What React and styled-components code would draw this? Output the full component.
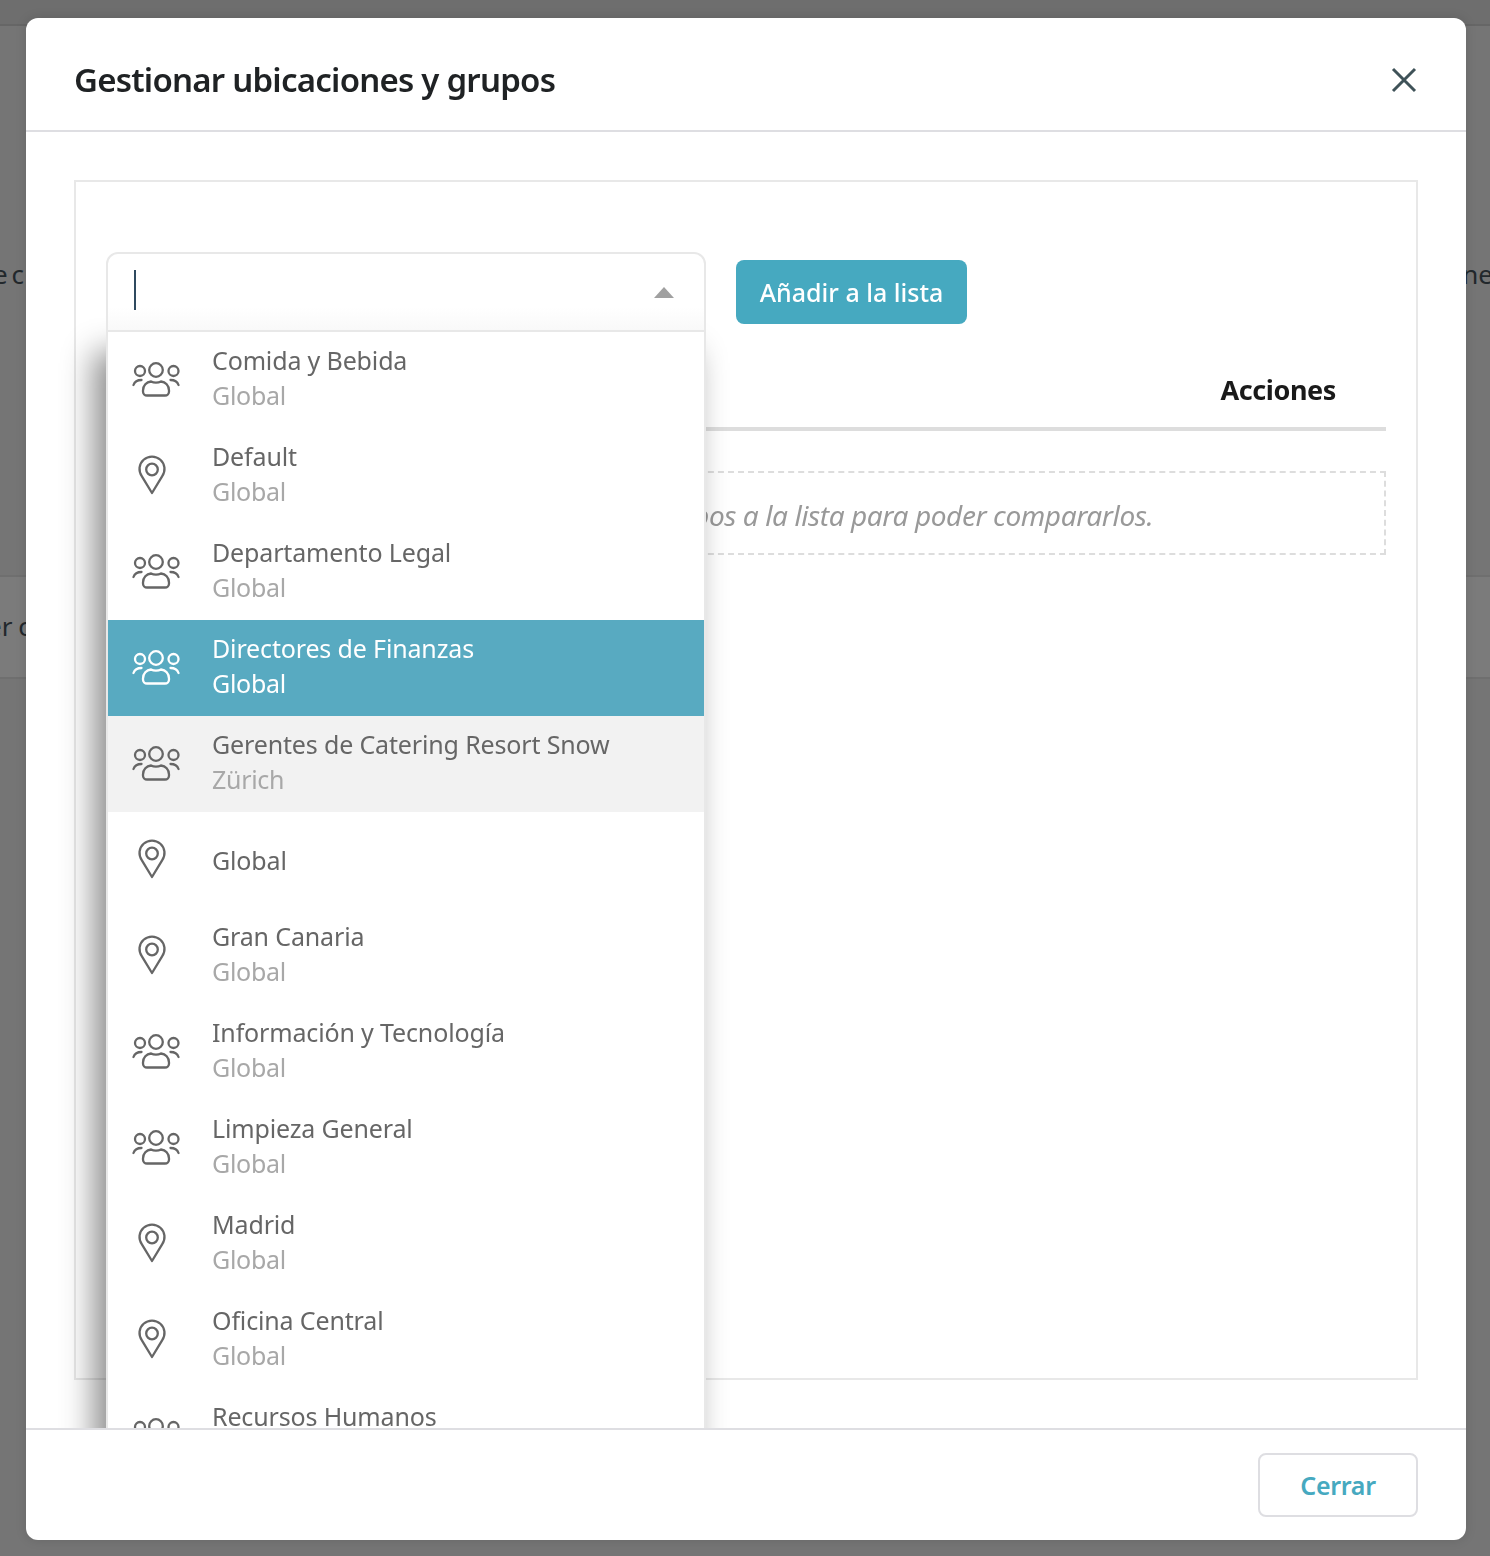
import styled, { createGlobalStyle } from 'styled-components';

const GlobalStyle = createGlobalStyle`
  html, body {
    margin: 0;
    padding: 0;
    height: 100%;
    background: #757575;
    font-family: 'Noto Sans', 'Open Sans', sans-serif;
  }

  * {
    box-sizing: border-box;
  }
`;

const options = [
  { kind: 'group', title: 'Comida y Bebida', sub: 'Global' },
  { kind: 'pin', title: 'Default', sub: 'Global' },
  { kind: 'group', title: 'Departamento Legal', sub: 'Global' },
  { kind: 'group', title: 'Directores de Finanzas', sub: 'Global', state: 'selected' },
  { kind: 'group', title: 'Gerentes de Catering Resort Snow', sub: 'Zürich', state: 'hover' },
  { kind: 'pin', title: 'Global' },
  { kind: 'pin', title: 'Gran Canaria', sub: 'Global' },
  { kind: 'group', title: 'Información y Tecnología', sub: 'Global' },
  { kind: 'group', title: 'Limpieza General', sub: 'Global' },
  { kind: 'pin', title: 'Madrid', sub: 'Global' },
  { kind: 'pin', title: 'Oficina Central', sub: 'Global' },
  { kind: 'group', title: 'Recursos Humanos', sub: 'Global' },
];

function GroupIcon() {
  return (
    <svg width="48" height="35" viewBox="0 0 48 35" fill="none" stroke="currentColor" strokeWidth="2.3" strokeLinecap="round">
      <circle cx="8" cy="9" r="5" />
      <circle cx="24" cy="8" r="6.8" />
      <circle cx="41.5" cy="9" r="5" />
      <path d="M15 33.5h18a4 4 0 0 0 4-4v-1c0-5-3.5-8.5-8-9-1.5.8-3 1.2-5 1.2s-3.5-.4-5-1.2c-4.500.5-8 4-8 9v1a4 4 0 0 0 4 4z" />
      <path d="M1.500 23c1-3 4-5 8-5" />
      <path d="M46.500 23c-1-3-4-5-8-5" />
    </svg>
  );
}

function PinIcon() {
  return (
    <svg width="30" height="40" viewBox="0 0 30 40" fill="none" stroke="currentColor" strokeWidth="2.3" strokeLinejoin="round">
      <path d="M15 38L4.9 21.4A12.5 12.5 0 1 1 25.1 21.4Z" />
      <circle cx="15" cy="14.500" r="5.8" />
    </svg>
  );
}

export default function App() {
  return (
    <>
      <GlobalStyle />
      <Backdrop>
        <BackdropTop />
        <BackdropLine>
          <span>e c</span>
          <span>ne</span>
        </BackdropLine>
        <BackdropRow>
          <span>er c</span>
        </BackdropRow>
      </Backdrop>
      <Overlay>
        <Modal>
          <Header>
            <Title>Gestionar ubicaciones y grupos</Title>
            <CloseButton aria-label="Cerrar">
              <svg width="26" height="26" viewBox="0 0 26 26" fill="none" stroke="currentColor" strokeWidth="3">
                <path d="M2 2l22 22M24 2L2 24" />
              </svg>
            </CloseButton>
          </Header>
          <Body>
            <Panel>
              <Controls>
                <Combobox>
                  <SearchField>
                    <Caret />
                    <ArrowUp />
                  </SearchField>
                  <Menu>
                    {options.map((option) => (
                      <Option key={option.title} $state={option.state}>
                        <OptionIcon $pin={option.kind === 'pin'}>
                          {option.kind === 'group' ? <GroupIcon /> : <PinIcon />}
                        </OptionIcon>
                        <OptionText $hasSub={Boolean(option.sub)}>
                          <OptionTitle>{option.title}</OptionTitle>
                          {option.sub && <OptionSub $state={option.state}>{option.sub}</OptionSub>}
                        </OptionText>
                      </Option>
                    ))}
                  </Menu>
                </Combobox>
                <AddButton>Añadir a la lista</AddButton>
              </Controls>
              <TableHead>
                <ActionsLabel>Acciones</ActionsLabel>
              </TableHead>
              <EmptyNote>Añade más ubicaciones o grupos a la lista para poder compararlos.</EmptyNote>
            </Panel>
          </Body>
          <Footer>
            <CloseAction>Cerrar</CloseAction>
          </Footer>
        </Modal>
      </Overlay>
    </>
  );
}

const Backdrop = styled.div`
  height: 1556px;
  overflow: hidden;
  color: #22282c;
  font-size: 26px;
`;

const BackdropTop = styled.div`
  height: 26px;
  background: #6e6e6e;
  border-bottom: 2px solid #666666;
`;

const BackdropLine = styled.div`
  height: 549px;
  padding-top: 230px;
  display: flex;
  justify-content: space-between;
  white-space: nowrap;

  span:first-child {
    margin-left: -7px;
    word-spacing: -3px;
  }

  span:last-child {
    margin-right: -3px;
  }
`;

const BackdropRow = styled.div`
  height: 104px;
  padding-top: 31px;
  background: #7b7b7b;
  border-top: 2px solid #6f6f6f;
  border-bottom: 2px solid #6f6f6f;
  white-space: nowrap;

  span {
    margin-left: -13px;
    word-spacing: -1px;
  }
`;

const Overlay = styled.div`
  position: fixed;
  inset: 0;
  padding: 18px 24px 16px 26px;
`;

const Modal = styled.div`
  height: 100%;
  display: flex;
  flex-direction: column;
  background: #ffffff;
  border-radius: 12px;
  overflow: hidden;
  box-shadow: 0 0 12px rgba(0, 0, 0, 0.12);
`;

const Header = styled.header`
  flex: none;
  height: 114px;
  padding: 10px 48px 0;
  display: flex;
  align-items: center;
  justify-content: space-between;
  border-bottom: 2px solid #dedee2;
`;

const Title = styled.h1`
  margin: 0;
  font-size: 33px;
  font-weight: 600;
  letter-spacing: -0.77px;
  color: #1f2224;
`;

const CloseButton = styled.button`
  width: 26px;
  height: 26px;
  margin: 2px 1px 0 0;
  padding: 0;
  border: none;
  background: none;
  color: #3f5258;
  cursor: pointer;
`;

const Body = styled.main`
  flex: 1;
  min-height: 0;
  padding: 48px;
  overflow: hidden;
`;

const Panel = styled.section`
  height: 1200px;
  padding: 70px 30px 0;
  border: 2px solid #e8e8e8;
`;

const Controls = styled.div`
  display: flex;
  align-items: center;
  gap: 30px;
`;

const Combobox = styled.div`
  position: relative;
  width: 600px;
`;

const SearchField = styled.div`
  position: relative;
  z-index: 1;
  height: 80px;
  padding: 0 30px 0 26px;
  display: flex;
  align-items: center;
  justify-content: space-between;
  background: linear-gradient(#ffffff 70%, #f9f9f9);
  border: 2px solid #e8e8e8;
  border-radius: 12px 12px 0 0;
`;

const Caret = styled.span`
  width: 2px;
  height: 40px;
  margin-bottom: 4px;
  background: #2f4a5f;
`;

const ArrowUp = styled.span`
  width: 0;
  height: 0;
  border-left: 10px solid transparent;
  border-right: 10px solid transparent;
  border-bottom: 11px solid #a0a0a0;
`;

const Menu = styled.div`
  position: absolute;
  top: 78px;
  left: 0;
  right: 0;
  padding-top: 2px;
  background: #ffffff;
  border: 2px solid #e8e8e8;
  border-top: none;
  box-shadow: -12px 22px 30px rgba(0, 0, 0, 0.45);
`;

const Option = styled.div`
  height: 96px;
  padding-left: 24px;
  display: flex;
  align-items: center;
  color: ${(props) => (props.$state === 'selected' ? '#ffffff' : '#666666')};
  background: ${(props) => {
    if (props.$state === 'selected') return '#58aac1';
    if (props.$state === 'hover') return '#f2f2f2';
    return '#ffffff';
  }};
`;

const OptionIcon = styled.div`
  width: 80px;
  flex: none;
  display: flex;
  padding-left: ${(props) => (props.$pin ? 5 : 0)}px;
  margin-bottom: ${(props) => (props.$pin ? 2 : 1)}px;
`;

const OptionText = styled.div`
  padding-bottom: ${(props) => (props.$hasSub ? 5 : 0)}px;
`;

const OptionTitle = styled.div`
  font-size: 25px;
  line-height: 35px;
  letter-spacing: -0.15px;
`;

const OptionSub = styled.div`
  font-size: 25px;
  line-height: 35px;
  letter-spacing: -0.3px;
  color: ${(props) => (props.$state === 'selected' ? '#ffffff' : '#a8a8a8')};
`;

const AddButton = styled.button`
  width: 231px;
  height: 64px;
  padding: 0;
  border: none;
  border-radius: 8px;
  background: #46a9c0;
  color: #ffffff;
  font-family: inherit;
  font-size: 25px;
  font-weight: 500;
  cursor: pointer;
`;

const TableHead = styled.div`
  height: 68px;
  margin-top: 31px;
  padding: 0 50px 12px 0;
  display: flex;
  justify-content: flex-end;
  align-items: center;
  border-bottom: 4px solid #dddddd;
`;

const ActionsLabel = styled.span`
  font-size: 27px;
  font-weight: 700;
  letter-spacing: -0.4px;
  color: #1a1a1a;
`;

const EmptyNote = styled.p`
  height: 84px;
  margin: 40px 0 0;
  padding-top: 4px;
  display: flex;
  align-items: center;
  justify-content: center;
  border: 2px dashed #dddddd;
  font-size: 28px;
  font-style: italic;
  letter-spacing: -0.4px;
  color: #999999;
  white-space: nowrap;
`;

const Footer = styled.footer`
  flex: none;
  height: 112px;
  padding: 0 48px;
  display: flex;
  align-items: center;
  justify-content: flex-end;
  border-top: 2px solid #dedee2;
`;

const CloseAction = styled.button`
  width: 160px;
  height: 64px;
  border: 2px solid #dedee2;
  border-radius: 8px;
  background: #ffffff;
  color: #46a9c0;
  font-family: inherit;
  font-size: 25px;
  font-weight: 600;
  letter-spacing: -0.3px;
  cursor: pointer;
`;
